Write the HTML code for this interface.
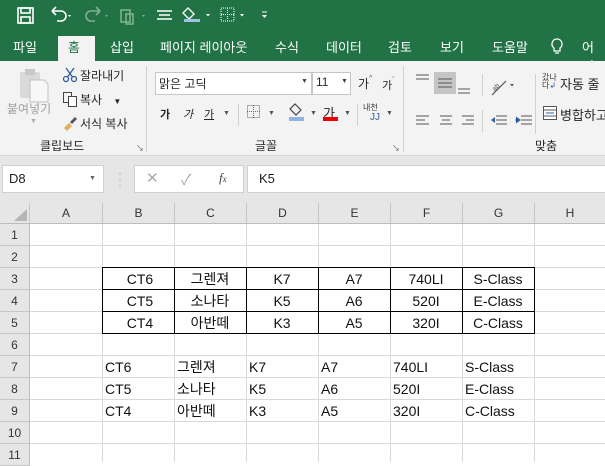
<!DOCTYPE html>
<html><head><meta charset="utf-8"><style>
*{margin:0;padding:0;box-sizing:border-box}
body{width:605px;height:462px;overflow:hidden;position:relative;background:#fff;font-family:"Liberation Sans","Noto Sans CJK KR",sans-serif;font-size:12px;color:#222}
.a{position:absolute;white-space:nowrap}
.tab{position:absolute;top:37px;color:#fff;font-size:13px}
.rb{font-size:12px;color:#262626}
.sep{position:absolute;width:1px;background:#d0d0d0}
.ch{position:absolute;top:203px;height:21px;background:#e6e6e6;border-right:1px solid #c6c6c6;border-bottom:1px solid #bdbdbd;text-align:center;line-height:21px;font-size:12px;color:#333}
.rh{position:absolute;left:0;width:30px;height:22px;background:#e6e6e6;border-bottom:1px solid #c6c6c6;border-right:1px solid #bdbdbd;text-align:center;line-height:22px;font-size:12px;color:#333}
.vl{position:absolute;top:224px;width:1px;height:238px;background:#d9d9d9}
.hl{position:absolute;left:30px;width:575px;height:1px;background:#d9d9d9}
.c{position:absolute;font-size:14px;color:#111;line-height:22px;height:22px}
</style></head><body>
<div class="a" style="left:0;top:0;width:605px;height:61px;background:#217346"></div>
<svg class="a" style="left:0;top:0" width="290" height="30">
<g fill="none" stroke="#fff" stroke-width="1.6">
<rect x="18" y="8" width="15" height="15"/><rect x="21" y="8" width="9" height="5"/><rect x="21" y="17" width="9" height="6"/>
<path d="M52 11 h9 a5 5 0 0 1 0 10 h-4 M52 11 l4 -4 M52 11 l4 4"/>
</g>
<path d="M68 15 l3 0 l-1.5 2z" fill="#fff"/>
<g fill="none" stroke="#7fb08f" stroke-width="1.6"><path d="M100 11 h-9 a5 5 0 0 0 0 10 h4 M100 11 l-4 -4 M100 11 l-4 4"/><rect x="121" y="10" width="9" height="12"/><rect x="126" y="14" width="7" height="10"/></g>
<path d="M105 15 l3 0 l-1.5 2zM142 15 l3 0 l-1.5 2z" fill="#7fb08f"/>
<g stroke="#fff" stroke-width="1.4"><path d="M157 11h15M159 15h11M157 19h15"/></g>
<path d="M188 8 l6 6 l-5 5 l-6 -6z" fill="none" stroke="#fff" stroke-width="1.4"/>
<rect x="184" y="19" width="16" height="3" fill="#9dc3e6"/>
<path d="M206 14 l4 0 l-2 2.5z M240 14 l4 0 l-2 2.5z M262 15 l5 0 l-2.5 3z" fill="#fff"/><path d="M262 12h5" stroke="#fff"/>
<rect x="221" y="8" width="13" height="13" fill="none" stroke="#fff" stroke-dasharray="1 1"/><path d="M227.5 8v13M221 14.5h13" stroke="#fff" stroke-dasharray="1 1"/>
</svg>
<div class="a" style="left:58px;top:36px;width:37px;height:26px;background:#f3f3f3"></div>
<div class="tab" style="left:13px">파일</div>
<div class="tab" style="left:68px;color:#217346">홈</div>
<div class="tab" style="left:110px">삽입</div>
<div class="tab" style="left:160px">페이지 레이아웃</div>
<div class="tab" style="left:275px">수식</div>
<div class="tab" style="left:326px">데이터</div>
<div class="tab" style="left:388px">검토</div>
<div class="tab" style="left:440px">보기</div>
<div class="tab" style="left:492px">도움말</div>
<svg class="a" style="left:550px;top:37px" width="14" height="20"><path d="M7 2a5 5 0 0 0-3 9v3h6v-3a5 5 0 0 0-3-9zM5 16h4" fill="none" stroke="#fff" stroke-width="1.3"/></svg>
<div class="tab" style="left:582px">어떤</div>
<div class="a" style="left:0;top:61px;width:605px;height:94px;background:#f3f3f3"></div>
<div class="a" style="left:0;top:155px;width:605px;height:1px;background:#d6d6d6"></div>
<div class="a" style="left:0;top:156px;width:605px;height:68px;background:#e6e6e6"></div>
<svg class="a" style="left:18px;top:66px" width="32" height="40"><rect x="2" y="6" width="20" height="26" rx="2" fill="#d9d9d9"/><rect x="7" y="3" width="10" height="6" fill="#c8c8c8"/><path d="M12 14h14l4 4v18h-18z" fill="#f7f7f7" stroke="#c0c0c0"/></svg>
<div class="a rb" style="left:7px;top:100px;color:#a0a0a0">붙여넣기</div>
<div class="a" style="left:30px;top:118px;font-size:7px;color:#aaa">▼</div>
<svg class="a" style="left:62px;top:67px" width="16" height="16"><g fill="none" stroke="#2f5f9e" stroke-width="1.3"><circle cx="4" cy="12" r="2.5"/><circle cx="12" cy="12" r="2.5"/><path d="M5.5 10L12 1M10.5 10L4 1"/></g></svg>
<div class="a rb" style="left:80px;top:67px">잘라내기</div>
<svg class="a" style="left:62px;top:91px" width="16" height="16"><g fill="none" stroke="#444"><rect x="1.5" y="1.5" width="8" height="10"/><rect x="6.5" y="5.5" width="8" height="10" fill="#fff"/></g></svg>
<div class="a rb" style="left:80px;top:91px">복사 <span style="font-size:8px;margin-left:8px">▼</span></div>
<svg class="a" style="left:60px;top:114px" width="18" height="18"><path d="M4 14l5-5 3 3-5 5z" fill="#e3b05a"/><path d="M10 8l5-5 2 2-5 5z" fill="#555"/></svg>
<div class="a rb" style="left:80px;top:115px">서식 복사</div>
<div class="a rb" style="left:40px;top:137px">클립보드</div>
<div class="a" style="left:136px;top:143px;font-size:8px;color:#666">↘</div>
<div class="sep" style="left:146px;top:66px;height:86px"></div>
<div class="a" style="left:155px;top:72px;width:157px;height:23px;background:#fff;border:1px solid #c6c6c6"></div>
<div class="a rb" style="left:159px;top:75px;font-size:12px">맑은 고딕</div>
<div class="a" style="left:301px;top:78px;font-size:7px;color:#444">▼</div>
<div class="a" style="left:312px;top:72px;width:39px;height:23px;background:#fff;border:1px solid #c6c6c6"></div>
<div class="a rb" style="left:316px;top:75px">11</div>
<div class="a" style="left:341px;top:78px;font-size:7px;color:#444">▼</div>
<div class="a rb" style="left:358px;top:75px">가<span style="font-size:7px;color:#2f5f9e;vertical-align:top">^</span></div>
<div class="a rb" style="left:382px;top:77px;font-size:11px">가<span style="font-size:7px;color:#2f5f9e;vertical-align:top">ˇ</span></div>
<div class="a rb" style="left:160px;top:106px;font-size:11px;font-weight:bold">가</div>
<div class="a rb" style="left:183px;top:106px;font-size:11px;font-style:italic">가</div>
<div class="a rb" style="left:204px;top:106px;font-size:11px;text-decoration:underline">가</div>
<div class="a" style="left:223px;top:110px;font-size:7px;color:#555">▼</div>
<div class="sep" style="left:238px;top:104px;height:22px"></div>
<svg class="a" style="left:246px;top:104px" width="16" height="16"><rect x="1.5" y="1.5" width="12" height="12" fill="none" stroke="#666" stroke-dasharray="1 1"/><path d="M7.5 1v13M1 7.5h13" stroke="#666" stroke-dasharray="1 1"/></svg>
<div class="a" style="left:268px;top:110px;font-size:7px;color:#555">▼</div>
<svg class="a" style="left:287px;top:102px" width="20" height="20"><path d="M8 2l6 6-5 5-6-6z" fill="none" stroke="#444" stroke-width="1.2"/><rect x="2" y="15" width="15" height="4" fill="#8fb4e3"/></svg>
<div class="a" style="left:310px;top:110px;font-size:7px;color:#555">▼</div>
<div class="a rb" style="left:323px;top:103px;font-size:13px">가</div>
<div class="a" style="left:323px;top:117px;width:15px;height:4px;background:#e00"></div>
<div class="a" style="left:344px;top:110px;font-size:7px;color:#555">▼</div>
<div class="sep" style="left:357px;top:104px;height:22px"></div>
<div class="a" style="left:363px;top:102px;font-size:8px;color:#333">내천</div>
<div class="a" style="left:370px;top:112px;font-size:10px;color:#2f5f9e">JJ</div>
<div class="a" style="left:386px;top:110px;font-size:7px;color:#555">▼</div>
<div class="a rb" style="left:255px;top:137px">글꼴</div>
<div class="a" style="left:392px;top:143px;font-size:8px;color:#666">↘</div>
<div class="sep" style="left:403px;top:66px;height:86px"></div>
<div class="a" style="left:434px;top:72px;width:22px;height:22px;background:#c5c5c5"></div>
<svg class="a" style="left:410px;top:70px" width="125" height="60"><g stroke="#555" stroke-width="1.1">
<path d="M6 5h13M6 9h13M28 9h14M28 13h14M28 17h14M48 19h12M48 23h12"/>
<path d="M6 46h13M6 50h9M6 54h13M30 46h12M32 50h8M30 54h12M52 46h12M56 50h8M52 54h12"/>
<path d="M86 46h11M86 50h11M86 54h11M111 46h11M111 50h11M111 54h11"/>
</g><path d="M85 47l-4 3 4 3z" fill="#2f5f9e"/><path d="M105 50h4M106 47l4 3-4 3" fill="#2f5f9e" stroke="#2f5f9e"/>
<path d="M82 25l14-14" stroke="#555" stroke-width="1.2"/><text x="81" y="19" font-size="7" fill="#555" transform="rotate(-45 86 16)">ab</text>
<path d="M100 14l4 0l-2 2.5z" fill="#555"/></svg>
<div class="sep" style="left:482px;top:74px;height:22px"></div>
<div class="sep" style="left:482px;top:110px;height:22px"></div>
<div class="sep" style="left:535px;top:74px;height:60px"></div>
<div class="a" style="left:542px;top:74px;font-size:8px;color:#333;line-height:8px">갔나<br>다<span style="color:#2f5f9e">↲</span></div>
<div class="a rb" style="left:560px;top:74px;font-size:13px">자동 줄</div>
<svg class="a" style="left:542px;top:105px" width="16" height="16"><rect x="1.5" y="1.5" width="13" height="13" fill="#fff" stroke="#555"/><path d="M1 5h14M1 11h14" stroke="#555"/><path d="M4 8h8" stroke="#2f5f9e"/></svg>
<div class="a rb" style="left:560px;top:105px;font-size:13px">병합하고</div>
<div class="a rb" style="left:535px;top:137px">맞춤</div>
<div class="a" style="left:2px;top:165px;width:102px;height:28px;background:#fff;border:1px solid #d0d0d0"></div>
<div class="a" style="left:9px;top:171px;font-size:13px;color:#222">D8</div>
<div class="a" style="left:89px;top:175px;font-size:7px;color:#666">▼</div>
<div class="a" style="left:118px;top:170px;font-size:12px;color:#aaa;line-height:6px">·<br>·<br>·</div>
<div class="a" style="left:134px;top:165px;width:110px;height:28px;background:#fff;border:1px solid #d0d0d0"></div>
<div class="a" style="left:146px;top:169px;font-size:15px;color:#aaa">✕</div>
<div class="a" style="left:181px;top:169px;font-size:15px;color:#aaa">✓</div>
<div class="a" style="left:219px;top:170px;font-size:13px;font-style:italic;font-family:'Liberation Serif',serif;color:#444">f<span style="font-size:9px">x</span></div>
<div class="a" style="left:247px;top:165px;width:360px;height:28px;background:#fff;border:1px solid #d0d0d0"></div>
<div class="a" style="left:259px;top:171px;font-size:13px;color:#222">K5</div>
<div class="a" style="left:0;top:203px;width:30px;height:21px;background:#e6e6e6;border-right:1px solid #c6c6c6;border-bottom:1px solid #bdbdbd"></div>
<svg class="a" style="left:12px;top:208px" width="16" height="14"><path d="M15 1v12H2z" fill="#b5b5b5"/></svg>
<div class="ch" style="left:30px;width:73px">A</div>
<div class="ch" style="left:103px;width:72px">B</div>
<div class="ch" style="left:175px;width:72px">C</div>
<div class="ch" style="left:247px;width:72px">D</div>
<div class="ch" style="left:319px;width:72px">E</div>
<div class="ch" style="left:391px;width:72px">F</div>
<div class="ch" style="left:463px;width:72px">G</div>
<div class="ch" style="left:535px;width:70px;border-right:none">H</div>
<div class="rh" style="top:224px">1</div><div class="rh" style="top:246px">2</div><div class="rh" style="top:268px">3</div><div class="rh" style="top:290px">4</div><div class="rh" style="top:312px">5</div><div class="rh" style="top:334px">6</div><div class="rh" style="top:356px">7</div><div class="rh" style="top:378px">8</div><div class="rh" style="top:400px">9</div><div class="rh" style="top:422px">10</div><div class="rh" style="top:444px">11</div>
<div class="vl" style="left:102px"></div><div class="vl" style="left:174px"></div><div class="vl" style="left:246px"></div><div class="vl" style="left:318px"></div><div class="vl" style="left:390px"></div><div class="vl" style="left:462px"></div><div class="vl" style="left:534px"></div>
<div class="hl" style="top:245px"></div><div class="hl" style="top:267px"></div><div class="hl" style="top:289px"></div><div class="hl" style="top:311px"></div><div class="hl" style="top:333px"></div><div class="hl" style="top:355px"></div><div class="hl" style="top:377px"></div><div class="hl" style="top:399px"></div><div class="hl" style="top:421px"></div><div class="hl" style="top:443px"></div>
<svg class="a" style="left:0;top:0" width="605" height="462"><g stroke="#000" stroke-width="1" fill="none" shape-rendering="crispEdges">
<rect x="102.5" y="267.5" width="432" height="66"/>
<path d="M102 289.5h433M102 311.5h433M174.5 268v66M246.5 268v66M318.5 268v66M390.5 268v66M462.5 268v66"/></g></svg>
<div class="c" style="left:102px;top:268px;width:72px;text-align:center;padding-left:4px">CT6</div>
<div class="c" style="left:174px;top:268px;width:72px;text-align:center">그렌져</div>
<div class="c" style="left:246px;top:268px;width:72px;text-align:center">K7</div>
<div class="c" style="left:318px;top:268px;width:72px;text-align:center">A7</div>
<div class="c" style="left:390px;top:268px;width:72px;text-align:center">740LI</div>
<div class="c" style="left:462px;top:268px;width:72px;text-align:center">S-Class</div>
<div class="c" style="left:102px;top:290px;width:72px;text-align:center;padding-left:4px">CT5</div>
<div class="c" style="left:174px;top:290px;width:72px;text-align:center">소나타</div>
<div class="c" style="left:246px;top:290px;width:72px;text-align:center">K5</div>
<div class="c" style="left:318px;top:290px;width:72px;text-align:center">A6</div>
<div class="c" style="left:390px;top:290px;width:72px;text-align:center">520I</div>
<div class="c" style="left:462px;top:290px;width:72px;text-align:center">E-Class</div>
<div class="c" style="left:102px;top:312px;width:72px;text-align:center;padding-left:4px">CT4</div>
<div class="c" style="left:174px;top:312px;width:72px;text-align:center">아반떼</div>
<div class="c" style="left:246px;top:312px;width:72px;text-align:center">K3</div>
<div class="c" style="left:318px;top:312px;width:72px;text-align:center">A5</div>
<div class="c" style="left:390px;top:312px;width:72px;text-align:center">320I</div>
<div class="c" style="left:462px;top:312px;width:72px;text-align:center">C-Class</div>
<div class="c" style="left:105px;top:356px">CT6</div><div class="c" style="left:177px;top:356px">그렌져</div><div class="c" style="left:249px;top:356px">K7</div><div class="c" style="left:321px;top:356px">A7</div><div class="c" style="left:393px;top:356px">740LI</div><div class="c" style="left:465px;top:356px">S-Class</div>
<div class="c" style="left:105px;top:378px">CT5</div><div class="c" style="left:177px;top:378px">소나타</div><div class="c" style="left:249px;top:378px">K5</div><div class="c" style="left:321px;top:378px">A6</div><div class="c" style="left:393px;top:378px">520I</div><div class="c" style="left:465px;top:378px">E-Class</div>
<div class="c" style="left:105px;top:400px">CT4</div><div class="c" style="left:177px;top:400px">아반떼</div><div class="c" style="left:249px;top:400px">K3</div><div class="c" style="left:321px;top:400px">A5</div><div class="c" style="left:393px;top:400px">320I</div><div class="c" style="left:465px;top:400px">C-Class</div>
</body></html>
